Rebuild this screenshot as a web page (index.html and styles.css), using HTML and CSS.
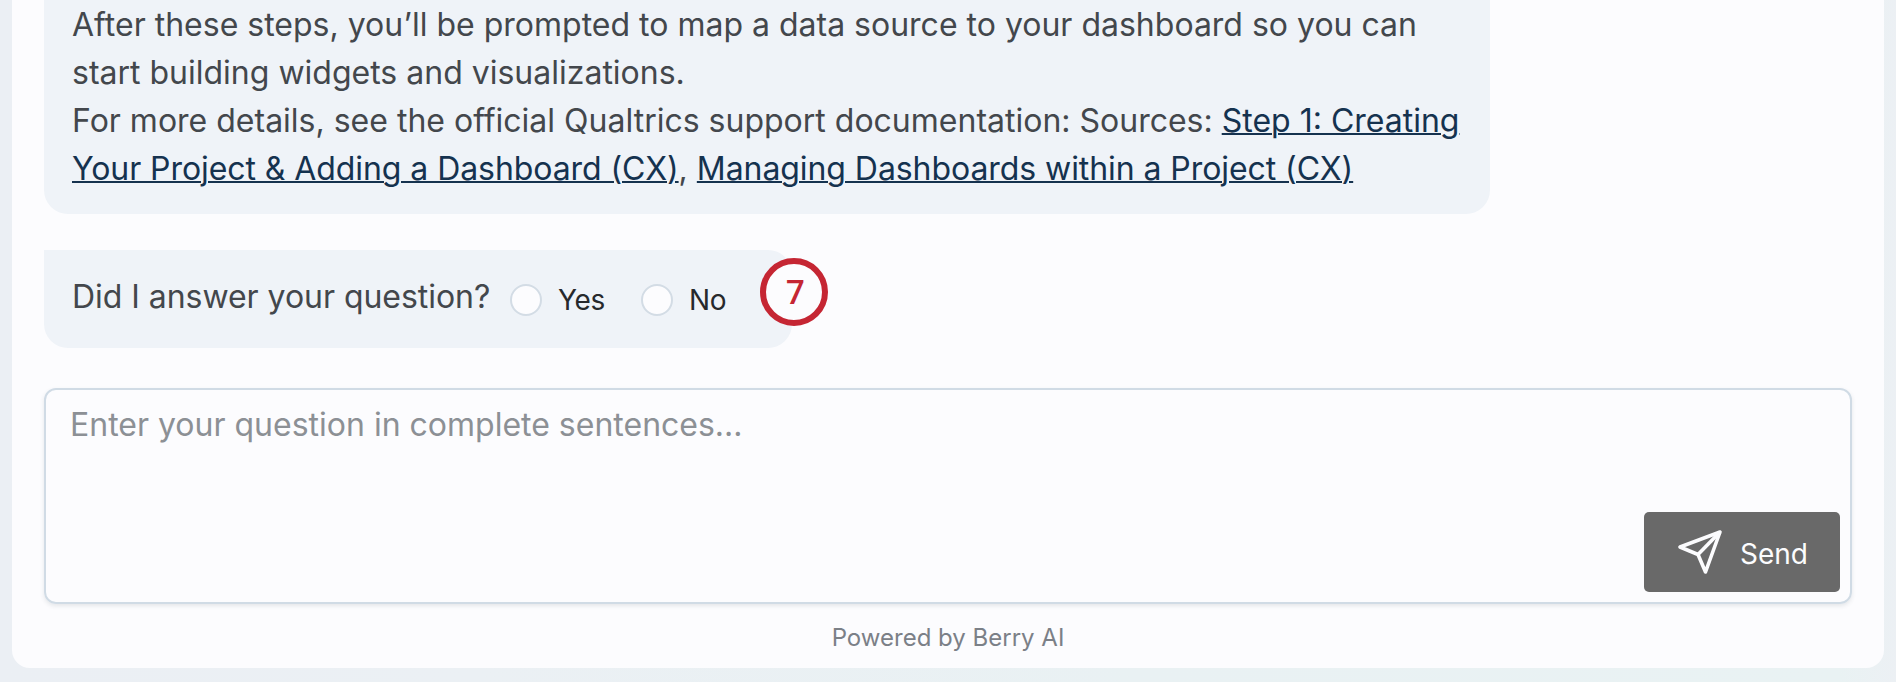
FILE: index.html
```html
<!DOCTYPE html>
<html lang="en">
<head>
  <meta charset="UTF-8" />
  <title>Berry AI Assistant</title>
  <link rel="stylesheet" href="styles.css">
</head>
<body>

<div class="chat">
  <div class="message message-answer">
    After these steps, you’ll be prompted to map a data source to your dashboard so you can<br/>
    start building widgets and visualizations.<br/>
    For more details, see the official Qualtrics support documentation: Sources: <a href="#">Step 1: Creating<br/>
    <span class="tight">Your Project &amp; Adding a Dashboard (CX)</span></a>, <a class="tight" href="#">Managing Dashboards within a Project (CX)</a>
  </div>

  <div class="message message-feedback">
    <span class="feedback-text">Did I answer your question?</span>
    <label class="option"><input type="radio" name="answered" />Yes</label>
    <label class="option"><input type="radio" name="answered" />No</label>
    <span class="callout">7</span>
  </div>

  <form class="composer">
    <textarea class="question" placeholder="Enter your question in complete sentences..."></textarea>
    <button class="send" type="button">
      <svg class="send-icon" viewBox="0 0 46 46" fill="none" stroke="currentColor" stroke-width="3.6" stroke-linejoin="round">
        <path d="M43 3 L3 18 L21 25.5 L28.5 43 Z" />
        <path d="M43 3 L21 25.5" />
      </svg>
      <span class="send-label">Send</span>
    </button>
  </form>

  <div class="powered">Powered by Berry AI</div>
</div>

</body>
</html>
```
FILE: styles.css
```css
* { box-sizing: border-box; }

body {
  margin: 0;
  height: 682px;
  padding: 0 12px;
  overflow: hidden;
  font-family: Inter, "Liberation Sans", sans-serif;
  background: linear-gradient(90deg, #ebeff4 0%, #ebf0f4 25%, #e9f1f3 60%, #e9f2f3 97%, #ecf0f4 100%);
}

.chat {
  display: flex;
  flex-direction: column;
  align-items: flex-start;
  height: 668px;
  padding: 0 32px;
  background: #fcfcfe;
  border-radius: 0 0 18px 18px;
}

.message {
  background: #eff3f8;
  color: #43474c;
  font-size: 32px;
  line-height: 48px;
  white-space: nowrap;
}

.message-answer {
  width: 1446px;
  height: 214px;
  padding: 1px 28px 0;
  border-radius: 0 0 24px 24px;
}
.message-answer a {
  color: #15324f;
  text-decoration-thickness: 2px;
}
.tight { letter-spacing: -0.07px; }

.message-feedback {
  position: relative;
  display: flex;
  width: 748px;
  height: 98px;
  margin-top: 36px;
  padding: 23px 28px;
  border-radius: 0 24px 24px 24px;
}
.feedback-text {
  flex: 0 0 438px;
  letter-spacing: -0.04px;
}

.option {
  display: flex;
  flex-shrink: 0;
  align-items: center;
  height: 54px;
  margin-right: 36px;
  color: #26292c;
  font-size: 28px;
  letter-spacing: -0.3px;
}
.option input {
  appearance: none;
  width: 32px;
  height: 32px;
  margin: 0 16px 0 0;
  border: 2px solid #d3dce5;
  border-radius: 50%;
  background: #fcfcfe;
}

.callout {
  position: absolute;
  left: 716px;
  top: 8px;
  width: 68px;
  height: 68px;
  padding-left: 3px;
  border: 6px solid #c52633;
  border-radius: 50%;
  background: #fcfcfe;
  color: #c52633;
  font: 500 33px/57px Roboto, sans-serif;
  text-align: center;
}

.composer {
  display: flex;
  align-items: flex-end;
  justify-content: flex-end;
  width: 1808px;
  height: 216px;
  margin-top: 40px;
  padding: 0 10px 10px 24px;
  border: 2px solid #d0dbe5;
  border-radius: 12px;
  box-shadow: 0 2px 4px rgba(60, 70, 80, 0.12);
}
.question {
  flex: 1;
  height: 202px;
  padding: 11px 0;
  border: 0;
  outline: 0;
  resize: none;
  background: none;
  font: 32px/48px Inter, sans-serif;
}
.question::placeholder { color: #8c9095; }

.send {
  display: flex;
  align-items: center;
  width: 196px;
  height: 80px;
  padding: 0 0 0 33px;
  border: 0;
  border-radius: 5px;
  background: #696969;
  color: #fcfcfe;
  font: 28px/34px Inter, sans-serif;
}
.send-icon {
  width: 46px;
  height: 46px;
  margin-right: 17px;
}
.send-label { padding-top: 4px; }

.powered {
  align-self: center;
  margin-top: 18px;
  color: #7b8087;
  font-size: 24px;
  line-height: 32px;
}
```
